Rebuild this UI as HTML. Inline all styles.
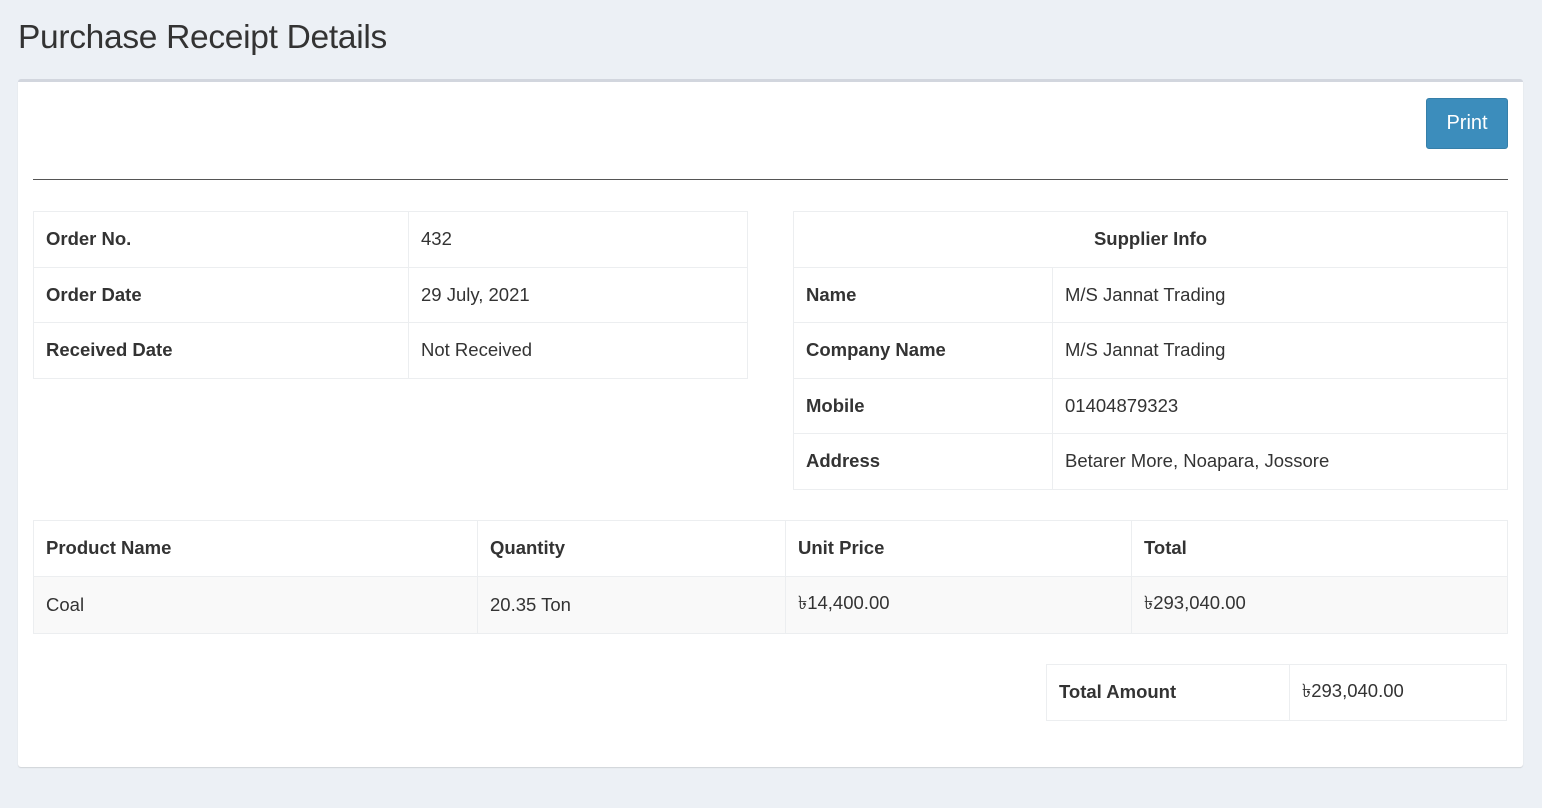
<!DOCTYPE html>
<html><head><meta charset="utf-8"><style>
*{box-sizing:border-box;margin:0;padding:0}
body{width:1542px;height:808px;background:#ecf0f5;font-family:"Liberation Sans",sans-serif;color:#333;position:relative;overflow:hidden}
h1{position:absolute;left:18px;top:19px;font-weight:normal;font-size:33.5px;color:#333;letter-spacing:-0.3px}
.card{position:absolute;left:18px;top:79px;width:1505px;height:688px;background:#fff;border-top:3px solid #d2d6de;border-radius:3px;box-shadow:0 1px 1px rgba(0,0,0,.12)}
.btn{position:absolute;left:1426px;top:98px;width:82px;height:51px;background:#3c8dbc;border:1px solid #367fa9;border-radius:3px;color:#fff;font-size:20px;line-height:49px;text-align:center}
.hr{position:absolute;left:33px;top:179px;width:1475px;height:1px;background:#555}
table{position:absolute;border-collapse:collapse;font-size:18.5px}
td{border:1px solid #eceef0;padding:0 12px;height:55.5px;vertical-align:middle}
b{font-weight:bold}
.s td{background:#f9f9f9}
</style></head><body>
<h1>Purchase Receipt Details</h1>
<div class="card"></div>
<div class="btn">Print</div>
<div class="hr"></div>
<table style="left:33px;top:211px;width:715px">
<tr><td style="width:375px"><b>Order No.</b></td><td>432</td></tr>
<tr><td><b>Order Date</b></td><td>29 July, 2021</td></tr>
<tr><td><b>Received Date</b></td><td>Not Received</td></tr>
</table>
<table style="left:793px;top:211px;width:715px">
<tr><td colspan="2" style="text-align:center"><b>Supplier Info</b></td></tr>
<tr><td style="width:259px"><b>Name</b></td><td>M/S Jannat Trading</td></tr>
<tr><td><b>Company Name</b></td><td>M/S Jannat Trading</td></tr>
<tr><td><b>Mobile</b></td><td>01404879323</td></tr>
<tr><td><b>Address</b></td><td>Betarer More, Noapara, Jossore</td></tr>
</table>
<table style="left:33px;top:520px;width:1475px">
<tr><td style="width:444px"><b>Product Name</b></td><td style="width:308px"><b>Quantity</b></td><td style="width:346px"><b>Unit Price</b></td><td><b>Total</b></td></tr>
<tr class="s" style="height:57px"><td>Coal</td><td>20.35 Ton</td><td>৳14,400.00</td><td>৳293,040.00</td></tr>
</table>
<table style="left:1046px;top:664px;width:461px">
<tr><td style="width:243px"><b>Total Amount</b></td><td>৳293,040.00</td></tr>
</table>
</body></html>
